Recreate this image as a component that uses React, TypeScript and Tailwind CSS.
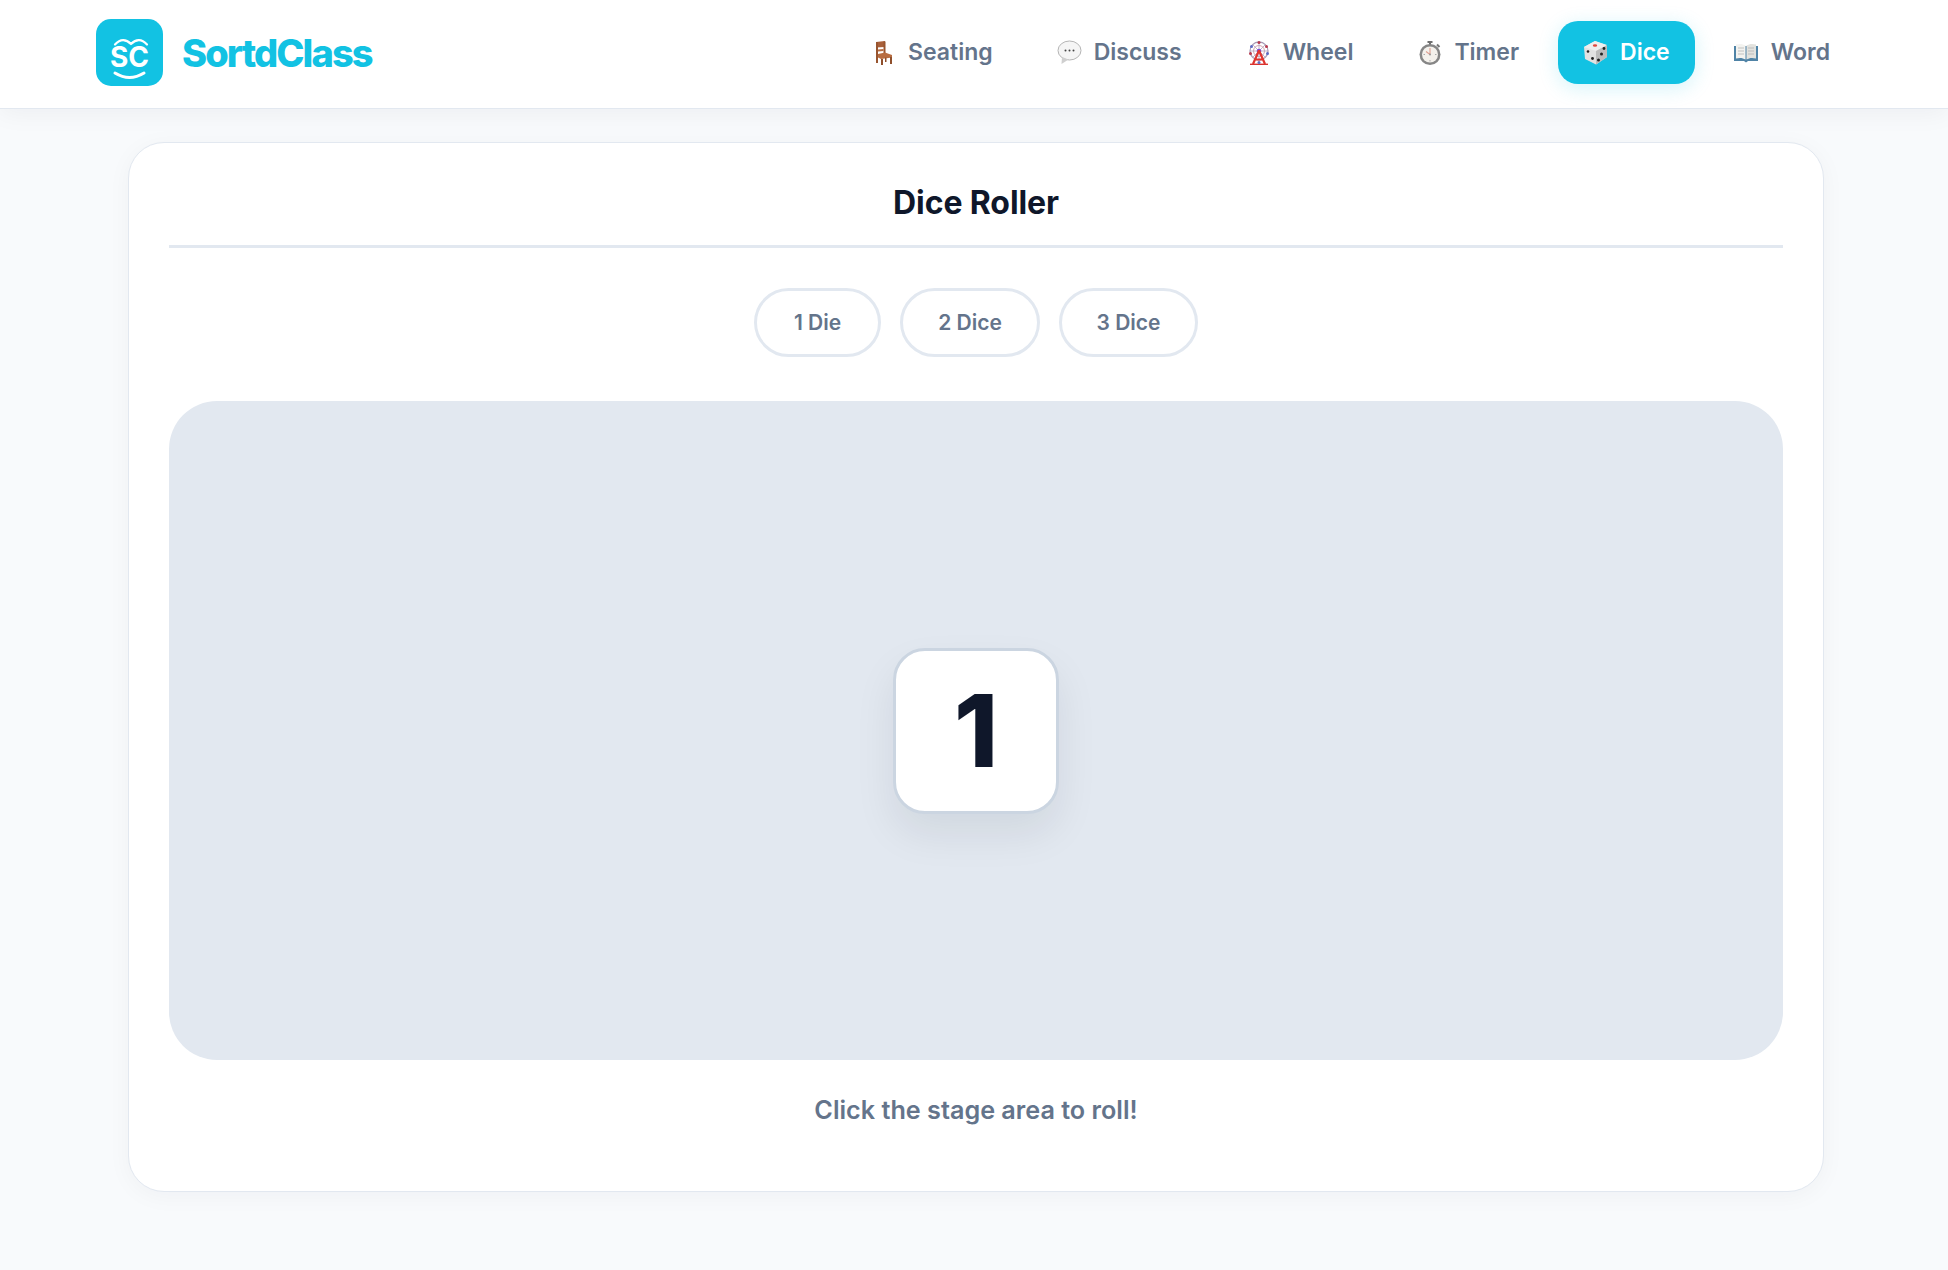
import React from "react";

const Chair = () => (
  <svg width="18" height="24" viewBox="0 0 18 24" className="ml-[4px] shrink-0">
    <path d="M1 1l9-1v6l-9 .5z" fill="#a9603a" />
    <path d="M1 1h2v21H1zM8.500 .5h2V13h-2z" fill="#98552f" />
    <path d="M3 8.500l5.500-.5v2l-5.500.5z" fill="#b56c42" />
    <path d="M3 13l7-1.500 7 2.500v2.500L6 18l-3-1.500z" fill="#b86d41" />
    <path d="M6 18h2v6H6zM15 16h2v7h-2zM10 16.500h1.500V21H10z" fill="#8f4f2c" />
  </svg>
);
const Bubble = () => (
  <svg width="25" height="25" viewBox="0 0 25 25" className="shrink-0">
    <ellipse cx="12.500" cy="10.500" rx="11.500" ry="9.500" fill="#f5f5f5" stroke="#b5b5b5" strokeWidth="1" />
    <path d="M5 17l-.5 7 7-4.500z" fill="#cfcfcf" />
    <circle cx="8.500" cy="10.500" r="1" fill="#444" />
    <circle cx="12.500" cy="10.500" r="1" fill="#444" />
    <circle cx="16.500" cy="10.500" r="1" fill="#444" />
  </svg>
);
const Ferris = () => (
  <svg width="22" height="24" viewBox="0 0 22 24" className="ml-[2px] shrink-0">
    <circle cx="11" cy="10" r="9" fill="none" stroke="#a99bb5" strokeWidth="1.300" />
    <circle cx="11" cy="10" r="5.500" fill="none" stroke="#d4a3ad" strokeWidth="1" />
    <path d="M11 1v18M2 10h18M4.600 3.600l12.800 12.800M17.400 3.600L4.600 16.400" stroke="#b9adc4" strokeWidth="0.900" />
    <circle cx="11" cy="10" r="2.300" fill="#7c4fd8" />
    <circle cx="11" cy="1.500" r="1.500" fill="#b83a4e" />
    <circle cx="3.500" cy="5.500" r="1.500" fill="#5d6bc4" />
    <circle cx="18.500" cy="5.500" r="1.500" fill="#b83a4e" />
    <circle cx="2.500" cy="12.500" r="1.500" fill="#b83a4e" />
    <circle cx="19.500" cy="12.500" r="1.500" fill="#5d6bc4" />
    <path d="M11 9.500L5 23M11 9.500L17 23M7 18.500h8" stroke="#e0352f" strokeWidth="2.200" fill="none" />
    <path d="M2 23.300h18" stroke="#d9332f" strokeWidth="1.400" />
    <circle cx="11" cy="21.500" r="1.500" fill="#5d6bc4" />
  </svg>
);
const Stopwatch = () => (
  <svg width="23" height="24" viewBox="0 0 23 24" className="ml-[2px] shrink-0">
    <path d="M8.500 1h5M11 1v3" stroke="#6f6f6f" strokeWidth="2" />
    <path d="M18 3.500l2.500 2.500" stroke="#777" strokeWidth="2" />
    <circle cx="11" cy="13.500" r="10.500" fill="#868686" />
    <circle cx="11" cy="13.500" r="8" fill="#f4f1ec" />
    <path d="M11 7v6.500M11 13.500l-4-3" stroke="#e0a092" strokeWidth="1.100" />
    <path d="M11 19v1.500M4.500 13.500H6M16 13.500h1.500" stroke="#aaa" strokeWidth="1" />
    <circle cx="11" cy="13.500" r="1" fill="#9a9a9a" />
  </svg>
);
const Die = () => (
  <svg width="25" height="25" viewBox="0 0 25 25" className="shrink-0">
    <path d="M12 1l11 4 1 12-11 7.500L2 19 1 7z" fill="#e2e2e2" />
    <path d="M1 7l11-6 12 4-11 6z" fill="#efefef" />
    <path d="M13 11l11-6v12l-11 7.500z" fill="#bcbcbc" />
    <ellipse cx="12" cy="5.500" rx="2.200" ry="1.200" fill="#e0483e" />
    <circle cx="5" cy="11.500" r="1.300" fill="#222" />
    <circle cx="9.500" cy="18.500" r="1.400" fill="#222" />
    <circle cx="21" cy="8.500" r="1.400" fill="#222" />
    <circle cx="18.500" cy="14" r="1.500" fill="#222" />
    <circle cx="15.500" cy="20" r="1.500" fill="#222" />
  </svg>
);
const Book = () => (
  <svg width="24" height="20" viewBox="0 0 24 20" className="shrink-0">
    <path d="M0 3h24v15H14l-2 1.500L10 18H0z" fill="#4f83a6" />
    <path d="M2 1.500c4-1 7-.5 9.500 1v14c-2.500-1.500-5.500-2-9.500-1z" fill="#f3f3f0" />
    <path d="M22 1.500c-4-1-7-.5-9.500 1v14c2.500-1.500 5.500-2 9.500-1z" fill="#e2e2de" />
    <path d="M4 5h6M4 8h6M4 11h6M14 5h6M14 8h6M14 11h6" stroke="#b4b4b4" strokeWidth="0.800" />
  </svg>
);

const Logo = () => (
  <div className="relative -mt-[1px] flex h-[67px] w-[67px] shrink-0 items-center justify-center rounded-[15px] bg-[#12c2e3]">
    <svg width="67" height="67" viewBox="0 0 67 67" className="absolute left-0 top-0">
      <path d="M19 25.500Q27 17 35 25M35 25Q43 17 51 25.500" fill="none" stroke="#fff" strokeWidth="2.200" strokeLinecap="round" />
      <path d="M19 54Q33.500 63 48 54" fill="none" stroke="#fff" strokeWidth="3" strokeLinecap="round" />
    </svg>
    <span className="relative mt-[9px] font-['Inter',sans-serif] text-[28px] font-bold leading-none text-white">SC</span>
  </div>
);

const items: { label: string; icon: React.ReactNode; active?: boolean }[] = [
  { label: "Seating", icon: <Chair /> },
  { label: "Discuss", icon: <Bubble /> },
  { label: "Wheel", icon: <Ferris /> },
  { label: "Timer", icon: <Stopwatch /> },
  { label: "Dice", icon: <Die />, active: true },
  { label: "Word", icon: <Book /> },
];

const buttons = [
  { t: "1 Die", w: "w-[127px]" },
  { t: "2 Dice", w: "w-[140px]" },
  { t: "3 Dice", w: "w-[139px]" },
];

export default function App() {
  return (
    <div className="min-h-[1270px] bg-[#f8fafc] font-['Inter',sans-serif]">
      <header className="flex h-[109px] items-center justify-between border-b border-[#e2e8f0] bg-white pb-[3px] pl-[96px] pr-[93px] shadow-[0_4px_24px_rgba(15,23,42,0.05)]">
        <div className="flex items-center gap-[19px]">
          <Logo />
          <span className="text-[38px] font-extrabold leading-none tracking-[-1.9px] text-[#12c2e3]">SortdClass</span>
        </div>
        <nav className="flex items-center gap-[14px]">
          {items.map((it) => (
            <div
              key={it.label}
              className={
                it.active
                  ? "flex h-[63px] items-center gap-[10px] rounded-[20px] bg-[#12c2e3] px-[25px] text-[23px] font-semibold text-white shadow-[0_4px_20px_rgba(18,194,227,0.18)]"
                  : "flex h-[63px] items-center gap-[10px] rounded-[20px] px-[25px] text-[23px] font-semibold text-[#64748b]"
              }
            >
              <span className="flex w-[27px] shrink-0 items-center">{it.icon}</span>
              <span>{it.label}</span>
            </div>
          ))}
        </nav>
      </header>
      <main className="ml-[128px] mt-[33px] flex h-[1050px] w-[1696px] flex-col rounded-[36px] border border-[#e2e8f0] bg-white px-[40px] shadow-[0_4px_24px_rgba(15,23,42,0.04)]">
        <div className="flex h-[105px] shrink-0 items-center justify-center border-b-[3px] border-[#e2e8f0] pt-[18px]">
          <h1 className="text-[32px] font-bold leading-none tracking-[-0.1px] text-[#0f172a]">Dice Roller</h1>
        </div>
        <div className="mt-[40px] flex shrink-0 justify-center gap-[19px]">
          {buttons.map((b) => (
            <button
              key={b.t}
              className={`flex h-[69px] items-center justify-center rounded-full border-[3px] border-[#e2e8f0] bg-white text-[21px] font-semibold text-[#64748b] ${b.w}`}
            >
              {b.t}
            </button>
          ))}
        </div>
        <div className="mt-[44px] flex h-[659px] shrink-0 items-center justify-center rounded-[48px] bg-[#e2e8f0]">
          <div className="flex h-[166px] w-[166px] items-center justify-center rounded-[32px] border-[3px] border-[#cbd5e1] bg-white text-[100px] font-extrabold leading-none text-[#0f172a] shadow-[0_20px_40px_rgba(15,23,42,0.08)]">
            1
          </div>
        </div>
        <p className="mt-[38px] text-center text-[25.2px] font-semibold leading-none text-[#64748b]">Click the stage area to roll!</p>
      </main>
    </div>
  );
}
